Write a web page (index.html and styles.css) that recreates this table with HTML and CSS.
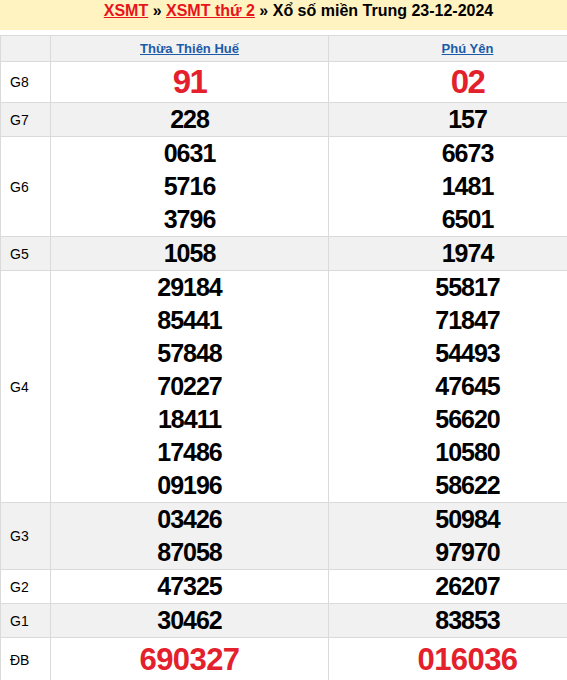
FILE: index.html
```html
<!DOCTYPE html>
<html lang="vi">
<head>
<meta charset="utf-8">
<title>XSMT thứ 2 - Xổ số miền Trung 23-12-2024</title>
<link rel="stylesheet" href="styles.css">
</head>
<body>
<div class="page">
  <h1 class="title"><a href="#">XSMT</a> » <a href="#">XSMT thứ 2</a> » Xổ số miền Trung 23-12-2024</h1>
  <table class="results">
    <colgroup><col class="c-label"><col class="c-prov"><col class="c-prov"></colgroup>
    <thead>
      <tr class="alt"><th></th><th><a href="#">Thừa Thiên Huế</a></th><th><a href="#">Phú Yên</a></th></tr>
    </thead>
    <tbody>
      <tr class="g8"><td class="lbl">G8</td><td><div class="n big">91</div></td><td><div class="n big">02</div></td></tr>
      <tr class="alt"><td class="lbl">G7</td><td><div class="n">228</div></td><td><div class="n">157</div></td></tr>
      <tr><td class="lbl">G6</td><td><div class="n">0631</div><div class="n">5716</div><div class="n">3796</div></td><td><div class="n">6673</div><div class="n">1481</div><div class="n">6501</div></td></tr>
      <tr class="alt"><td class="lbl">G5</td><td><div class="n">1058</div></td><td><div class="n">1974</div></td></tr>
      <tr><td class="lbl">G4</td>
        <td><div class="n">29184</div><div class="n">85441</div><div class="n">57848</div><div class="n">70227</div><div class="n">18411</div><div class="n">17486</div><div class="n">09196</div></td>
        <td><div class="n">55817</div><div class="n">71847</div><div class="n">54493</div><div class="n">47645</div><div class="n">56620</div><div class="n">10580</div><div class="n">58622</div></td></tr>
      <tr class="alt"><td class="lbl">G3</td><td><div class="n">03426</div><div class="n">87058</div></td><td><div class="n">50984</div><div class="n">97970</div></td></tr>
      <tr><td class="lbl">G2</td><td><div class="n">47325</div></td><td><div class="n">26207</div></td></tr>
      <tr class="alt"><td class="lbl">G1</td><td><div class="n">30462</div></td><td><div class="n">83853</div></td></tr>
      <tr class="db"><td class="lbl">ĐB</td><td><div class="n jackpot">690327</div></td><td><div class="n jackpot">016036</div></td></tr>
    </tbody>
  </table>
</div>
</body>
</html>
```
FILE: styles.css
```css
html, body {
  margin: 0;
  padding: 0;
  overflow: hidden;
  background: #ffffff;
}
body {
  font-family: "Liberation Sans", Arial, sans-serif;
  color: #000;
}
.page {
  width: 607px;
}
.title {
  margin: 0 0 5px 0;
  height: 30px;
  box-sizing: border-box;
  padding: 0 10px 0 0;
  background: #fff3c1;
  font-size: 16px;
  line-height: 22px;
  font-weight: bold;
  text-align: center;
  color: #000;
}
.title a {
  color: #e8141c;
  text-decoration: underline;
}
.results {
  width: 607px;
  border-collapse: collapse;
  table-layout: fixed;
}
.c-label { width: 50px; }
.c-prov { width: 278px; }
.results th,
.results td {
  border: 1px solid #dadada;
  padding: 0;
  text-align: center;
  vertical-align: middle;
}
.results th {
  height: 25px;
  font-size: 13px;
  font-weight: bold;
}
.results th a {
  color: #1c5ba8;
  text-decoration: underline;
}
.alt { background: #f1f1f1; }
.results td.lbl {
  text-align: left;
  padding-left: 9px;
  font-size: 14px;
  color: #000;
}
.n {
  font-size: 25px;
  line-height: 33px;
  font-weight: bold;
  letter-spacing: -1px;
}
.g8 .n { line-height: 40px; }
.big {
  font-size: 33px;
  color: #e3202b;
  letter-spacing: -1.5px;
}
.jackpot {
  font-size: 31px;
  line-height: 43px;
  color: #e3202b;
  letter-spacing: -0.6px;
}
```
